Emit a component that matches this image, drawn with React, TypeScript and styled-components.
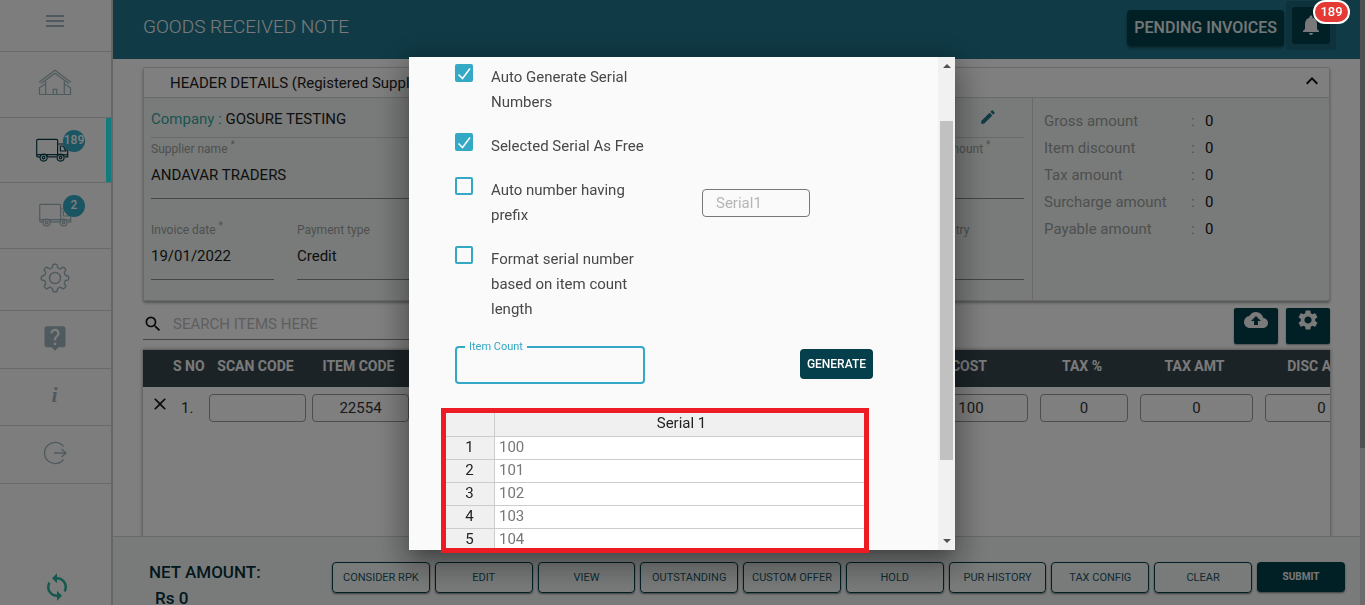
import React from "react";
import styled, { createGlobalStyle, css } from "styled-components";
import {
  MdClose,
  MdCloudUpload,
  MdEdit,
  MdKeyboardArrowUp,
  MdLiveHelp,
  MdMenu,
  MdNotifications,
  MdSearch,
  MdSettings,
  MdSync,
} from "react-icons/md";

const color = {
  ink: "#212121",
  muted: "#9c9f9d",
  petrol: "#063f4c",
  header: "#1f758c",
  accent: "#33a9c5",
  panel: "#f2f7f5",
  icon: "#9db5bb",
  line: "#d3d3d3",
};

const GlobalStyle = createGlobalStyle`
  *, *::before, *::after { box-sizing: border-box; }
  body {
    margin: 0;
    background: #fff;
    color: ${color.ink};
    font-family: Roboto, "Liberation Sans", sans-serif;
    font-size: 15px;
    line-height: 20px;
  }
  button, input { font: inherit; color: inherit; }
  button { cursor: pointer; }
`;

const Shell = styled.div`
  display: flex;
  height: 100vh;
  overflow: hidden;
`;

/* ---------- Sidebar ---------- */

const Sidebar = styled.nav`
  flex: none;
  display: flex;
  flex-direction: column;
  width: 113px;
  background: #fafafa;
  border-right: 2px solid #cdcdcd;
`;

const NavItem = styled.a<{ $height: number; $active?: boolean }>`
  position: relative;
  flex: none;
  display: flex;
  align-items: center;
  justify-content: center;
  height: ${(p) => p.$height}px;
  padding: 0 2px 4px 0;
  border-bottom: 1px solid ${color.line};
  color: ${(p) => (p.$active ? color.petrol : color.icon)};
  text-decoration: none;
  ${(p) =>
    p.$active &&
    css`
      box-shadow: inset -5px 0 0 #22f6fb;
    `}
`;

const MenuItem = styled(NavItem)`
  padding-bottom: 9px;
`;

const TruckItem = styled(NavItem)<{ $shift: number }>`
  padding: 0 0 0 ${(p) => p.$shift}px;
  justify-content: flex-start;
`;

const CountBadge = styled.span`
  position: absolute;
  left: 63px;
  top: 12px;
  width: 22px;
  height: 22px;
  border-radius: 50%;
  background: #34aac6;
  color: #fff;
  font-size: 12px;
  font-weight: 500;
  line-height: 21px;
  text-align: center;
`;

const InfoGlyph = styled.span`
  font-family: "Liberation Serif", serif;
  font-size: 22px;
  font-weight: 700;
  font-style: italic;
`;

const SyncLink = styled.a`
  display: flex;
  justify-content: center;
  margin-top: auto;
  padding: 0 0 3px 3px;
  color: #2ab09d;
`;

/* ---------- Main column ---------- */

const Main = styled.main`
  flex: 1;
  min-width: 0;
  display: flex;
  flex-direction: column;
`;

const TopBar = styled.header`
  flex: none;
  display: flex;
  align-items: center;
  height: 59px;
  padding: 0 24px 0 30px;
  background: ${color.header};
`;

const Title = styled.h1`
  flex: 1;
  margin: 0 0 6px;
  color: #f5f5f5;
  font-size: 19px;
  font-weight: 300;
  line-height: 24px;
`;

const PendingButton = styled.button`
  height: 36px;
  margin: 0 2px 3px 0;
  padding: 0 7px;
  border: 0;
  border-radius: 4px;
  background: #02404c;
  color: #e8eeee;
  font-weight: 500;
  font-size: 16px;
  box-shadow: 0 2px 3px rgba(0, 0, 0, 0.4);
`;

const BellWrap = styled.div`
  position: relative;
  margin-bottom: 9px;
  padding: 6px;
  border-radius: 2px;
  background: #1b6577;
`;

const BellButton = styled.button`
  display: flex;
  align-items: center;
  justify-content: center;
  width: 38px;
  height: 37px;
  padding: 0;
  border: 0;
  border-radius: 3px;
  background: #02404c;
  color: #f2f2f2;
`;

const AlertBadge = styled.span`
  position: absolute;
  z-index: 30;
  top: -1px;
  left: 27px;
  width: 37px;
  height: 24px;
  border: 2px solid #fff;
  border-radius: 12px;
  background: #e53935;
  color: #fff;
  font-size: 13px;
  font-weight: 500;
  line-height: 19px;
  text-align: center;
`;

const Content = styled.div`
  flex: 1;
  min-height: 0;
  display: flex;
  flex-direction: column;
  padding: 8px 30px 0;
`;

const Panel = styled.section`
  flex: none;
  border: 1px solid ${color.line};
  border-radius: 2px;
  background: ${color.panel};
  box-shadow: 0 2px 3px rgba(0, 0, 0, 0.35);
`;

const PanelHead = styled.div`
  display: flex;
  align-items: center;
  justify-content: space-between;
  height: 30px;
  padding: 0 5px 4px 26px;
  padding-bottom: 0;
  background: #fff;
  border-bottom: 1px solid ${color.line};
`;

const PanelTitle = styled.h2`
  margin: 0;
  font-size: 15px;
  font-weight: 400;
`;

const IconButton = styled.button`
  display: inline-flex;
  align-items: center;
  justify-content: center;
  padding: 0;
  border: 0;
  background: none;
  color: #111;
`;

const CollapseButton = styled(IconButton)`
  height: 20px;
  margin-bottom: 4px;
`;

const PanelBody = styled.div`
  display: flex;
  height: 202px;
`;

const PanelForm = styled.div`
  flex: 1;
  padding: 0 8px 0 7px;
  border-right: 1px solid ${color.line};
`;

const CompanyRow = styled.div`
  display: flex;
  align-items: center;
  justify-content: space-between;
  height: 40px;
  padding: 2px 27px 0 0;
  border-bottom: 1px solid ${color.line};

  button {
    margin-bottom: 4px;
    color: ${color.header};
  }
`;

const CompanyLabel = styled.span`
  color: #38a79d;
`;

const FieldRow = styled.div`
  display: grid;
  grid-template-columns: 123px 1fr 123px;
  column-gap: 23px;
  margin-bottom: 20px;
`;

const Field = styled.label<{ $span?: number }>`
  grid-column: span ${(p) => p.$span ?? 1};
  display: block;
  min-width: 0;
  color: ${color.muted};
  font-size: 12px;
  line-height: 22px;
  border-bottom: 1px solid #8a8a8a;

  sup {
    font-size: 10px;
    line-height: 0;
  }
`;

const FieldInput = styled.input`
  display: block;
  width: 100%;
  height: 30px;
  margin-bottom: 8px;
  padding: 0;
  border: 0;
  background: none;
  color: ${color.ink};
  font-size: 15px;
`;

const Summary = styled.dl`
  display: grid;
  grid-template-columns: 147px 14px 1fr;
  grid-auto-rows: 27px;
  align-items: center;
  width: 296px;
  margin: 0;
  padding: 9px 0 0 11px;
  color: ${color.muted};

  dt,
  dd {
    margin: 0;
  }
`;

const SummaryValue = styled.dd`
  color: #111;
`;

const SearchRow = styled.div`
  flex: none;
  display: flex;
  justify-content: space-between;
  align-items: flex-start;
  height: 49px;
  padding-top: 7px;
`;

const SearchBox = styled.label`
  display: flex;
  align-items: center;
  gap: 10px;
  width: 600px;
  height: 32px;
  border-bottom: 1px solid #8a8a8a;
`;

const SearchInput = styled.input`
  flex: 1;
  padding: 0;
  border: 0;
  background: none;

  &::placeholder {
    color: #bdbdbd;
    opacity: 1;
  }
`;

const ToolGroup = styled.div`
  display: flex;
  gap: 8px;
`;

const ToolButton = styled.button`
  display: flex;
  justify-content: center;
  align-items: flex-start;
  width: 44px;
  height: 36px;
  padding: 0;
  border: 0;
  border-radius: 2px;
  background: #02404c;
  color: #f5f5f5;
  box-shadow: 0 1px 2px rgba(0, 0, 0, 0.4);
`;

const ItemsFrame = styled.div`
  flex: 1;
  min-height: 0;
  overflow: hidden;
  box-shadow: 0 0 3px 1px rgba(0, 0, 0, 0.3);
`;

const ItemsTable = styled.table`
  width: calc(100% + 54px);
  table-layout: fixed;
  border-collapse: collapse;

  th {
    height: 37px;
    padding: 0 4px 5px 0;
    background: #37474f;
    color: #f5f5f5;
    font-size: 14px;
    font-weight: 700;
    white-space: nowrap;
  }

  td {
    height: 42px;
    padding: 0 3px;
  }

  td:first-child {
    padding: 0 0 4px 7px;
  }
`;

const CellInput = styled.input<{ $inset?: boolean }>`
  display: block;
  width: ${(p) => (p.$inset ? "calc(100% - 6px)" : "100%")};
  height: 28px;
  margin: 0 auto;
  padding: 0;
  border: 1px solid #9a9a9a;
  border-radius: 4px;
  background: none;
  color: #333;
  text-align: center;
`;

const RowNumber = styled.td`
  && {
    padding: 0 0 1px 8px;
  }
  color: #333;
`;

const Footer = styled.footer`
  flex: none;
  display: flex;
  height: 69px;
  padding: 25px 15px 0 36px;
  border-top: 1px solid ${color.line};
  background: ${color.panel};
`;

const NetAmount = styled.div`
  flex: none;
  width: 183px;
  color: #06303c;
  font-size: 17px;
  font-weight: 500;
  line-height: 20px;
`;

const NetValue = styled.div`
  padding: 6px 0 0 6px;
`;

const Actions = styled.div`
  flex: 1;
  display: grid;
  grid-template-columns: repeat(9, 1fr) 88px;
  align-items: start;
  gap: 5px;
`;

const ActionButton = styled.button<{ $solid?: boolean }>`
  height: ${(p) => (p.$solid ? 30 : 31)}px;
  padding: 0;
  border: ${(p) => (p.$solid ? "0" : `1px solid ${color.petrol}`)};
  border-radius: 4px;
  background: ${(p) => (p.$solid ? "#02404c" : "none")};
  color: ${(p) => (p.$solid ? "#f0f0f0" : "#1d5563")};
  font-size: ${(p) => (p.$solid ? 10 : 11)}px;
  font-weight: ${(p) => (p.$solid ? 700 : 400)};
  white-space: nowrap;
  box-shadow: 0 1px 2px rgba(0, 0, 0, 0.5);
`;

/* ---------- Scroll indicators ---------- */

const PageScroll = styled.div`
  flex: none;
  width: 5px;
  background: #d6d6d6;
`;

const PageThumb = styled.div`
  height: 74%;
  background: #a0a0a0;
`;

const DialogScroll = styled.div`
  flex: none;
  display: flex;
  flex-direction: column;
  align-items: center;
  justify-content: space-between;
  width: 17px;
  padding: 7px 0;
  background: #f1f1f1;
`;

const DialogThumb = styled.div`
  width: 13px;
  height: 339px;
  margin-bottom: 26px;
  background: #c1c1c1;
`;

const ScrollArrow = styled.span<{ $down?: boolean }>`
  border: 4px solid transparent;
  ${(p) =>
    p.$down
      ? "border-top-color: #505050; border-bottom: 0;"
      : "border-bottom-color: #505050; border-top: 0;"}
`;

/* ---------- Dialog ---------- */

const Backdrop = styled.div`
  position: fixed;
  inset: 0;
  z-index: 20;
  display: grid;
  grid-template-columns: 1fr 546px 1fr;
  padding: 57px 1px 55px 0;
  background: rgba(0, 0, 0, 0.5);
`;

const Dialog = styled.div`
  position: relative;
  grid-column: 2;
  display: flex;
  min-height: 0;
  background: #fafafa;
  box-shadow: 0 11px 15px -7px rgba(0, 0, 0, 0.2), 0 12px 30px 3px rgba(0, 0, 0, 0.24),
    0 9px 30px 8px rgba(0, 0, 0, 0.16);
`;

const DialogBody = styled.div`
  flex: 1;
  overflow: hidden;
  padding: 8px 65px 0 46px;
  color: #484848;
`;

const Options = styled.div`
  display: flex;
  flex-direction: column;
  gap: 19px;
`;

const OptionRow = styled.div`
  display: flex;
  align-items: center;
`;

const Option = styled.label`
  display: flex;
  align-items: flex-start;
  gap: 18px;
  width: 196px;
  line-height: 25px;
`;

const Tick = styled.input`
  flex: none;
  appearance: none;
  width: 18px;
  height: 18px;
  margin: -1px 0 0;
  border: 2px solid ${color.accent};
  border-radius: 2px;

  &:checked {
    background: ${color.accent}
      url("data:image/svg+xml,%3Csvg xmlns='http://www.w3.org/2000/svg' viewBox='0 0 14 14'%3E%3Cpath d='M1.5 8.5l4 4L13 2.5' fill='none' stroke='white' stroke-width='1.5'/%3E%3C/svg%3E")
      center / 14px 14px no-repeat;
  }
`;

const PrefixInput = styled.input`
  width: 108px;
  height: 28px;
  margin-left: 51px;
  padding: 0 13px;
  border: 1px solid #777;
  border-radius: 4px;
  background: none;

  &::placeholder {
    color: #b5b5b5;
    opacity: 1;
  }
`;

const GenerateRow = styled.div`
  display: flex;
  align-items: flex-start;
  justify-content: space-between;
  margin: 18px 0 27px;
`;

const CountField = styled.fieldset`
  width: 190px;
  height: 44px;
  margin: 0;
  padding: 0 8px;
  border: 2px solid ${color.accent};
  border-radius: 4px;
`;

const CountLegend = styled.legend`
  padding: 0 4px;
  color: ${color.accent};
  font-size: 11px;
  line-height: 14px;
`;

const CountInput = styled.input`
  display: block;
  width: 100%;
  height: 24px;
  padding: 0;
  border: 0;
  outline: 0;
  background: none;
`;

const GenerateButton = styled.button`
  height: 30px;
  margin-top: 9px;
  padding: 0 7px;
  border: 0;
  border-radius: 4px;
  background: ${color.petrol};
  color: #fff;
  font-size: 12px;
  font-weight: 500;
`;

const SerialTable = styled.table`
  width: 424px;
  margin-left: -10px;
  table-layout: fixed;
  border-collapse: separate;
  border-spacing: 0;

  th,
  td {
    height: 23px;
    padding: 0 4px 2px;
    border: 0 solid #ccc;
    border-width: 0 1px 1px 0;
    line-height: 20px;
  }

  th {
    background: #f0f0f0;
    color: #222;
    font-weight: 400;
  }

  thead th {
    height: 26px;
  }

  td {
    background: #fff;
    color: #777;
  }
`;

const Highlight = styled.div`
  position: absolute;
  top: 351px;
  right: 86px;
  bottom: -3px;
  left: 32px;
  border: 5px solid #ed1c24;
  pointer-events: none;
`;

/* ---------- Drawings ---------- */

const HouseIcon = () => (
  <svg width="34" height="27" viewBox="0 0 34 27" fill="none" stroke="currentColor" strokeWidth="1.2">
    <path d="M1 13.2 17 1.2l16 12M3 14.6 17 4.2l14 10.4" />
    <path d="M7.7 12v13.5M26.3 12v13.5M7.7 14.8l-6.2 4v6.7h31v-6.7l-6.2-4" />
    <path d="M15.3 25.5v-5.2h3.4v5.2" />
  </svg>
);

const TruckIcon = () => (
  <svg width="33" height="25" viewBox="0 0 33 25" fill="none" stroke="currentColor" strokeWidth="1.2">
    <path d="M4 18.8H1.8a1.1 1.1 0 0 1-1.1-1.1V2.5A1.1 1.1 0 0 1 1.8 1.4h18.7a1.1 1.1 0 0 1 1.1 1.1v14.2H.9" />
    <path d="M21.8 6h6.4l3.5 7v5.8h-3M24.4 8h3l2.4 5h-5.4zM11.2 18.8h9.4M11.2 16.8v2M20.6 16.8h11" />
    <circle cx="7.6" cy="19.6" r="3.5" />
    <circle cx="7.6" cy="19.6" r="1.3" />
    <circle cx="24.6" cy="19.6" r="3.5" />
    <circle cx="24.6" cy="19.6" r="1.3" />
  </svg>
);

const GearIcon = () => (
  <svg width="30" height="30" viewBox="0 0 30 30" fill="none" stroke="currentColor" strokeWidth="1.4">
    {Array.from({ length: 8 }, (_, i) => (
      <path
        key={i}
        transform={`rotate(${i * 45} 15 15)`}
        d="M11 5.3Q12.7 4.9 12.7 3.1Q12.7 1.3 14 1.3H16Q17.3 1.3 17.3 3.1Q17.3 4.9 19 5.3"
      />
    ))}
    <circle cx="15" cy="15" r="5.5" />
  </svg>
);

const ExitIcon = () => (
  <svg width="24" height="24" viewBox="0 0 24 24" fill="none" stroke="currentColor" strokeWidth="1.3">
    <path d="M20.5 5.5A10.6 10.6 0 1 0 20.5 18.5" />
    <path d="M11 12h12M18.5 8l4.5 4-4.5 4" />
  </svg>
);

const summary = [
  "Gross amount",
  "Item discount",
  "Tax amount",
  "Surcharge amount",
  "Payable amount",
];

const actions = [
  "CONSIDER RPK",
  "EDIT",
  "VIEW",
  "OUTSTANDING",
  "CUSTOM OFFER",
  "HOLD",
  "PUR HISTORY",
  "TAX CONFIG",
  "CLEAR",
];

const serials = [100, 101, 102, 103, 104, 105];

const columns: { name: string; value: string; width?: number; inset?: boolean }[] = [
  { name: "SCAN CODE", value: "", width: 103 },
  { name: "ITEM CODE", value: "22554", width: 103 },
  { name: "ITEM NAME", value: "" },
  { name: "COST", value: "100", width: 126, inset: true },
  { name: "TAX %", value: "0", width: 100, inset: true },
  { name: "TAX AMT", value: "0", width: 125, inset: true },
  { name: "DISC AMT", value: "0", width: 125, inset: true },
];

export default function App() {
  return (
    <>
      <GlobalStyle />
      <Shell>
        <Sidebar aria-label="Main">
          <MenuItem href="#menu" aria-label="Menu" $height={52}>
            <MdMenu size={24} />
          </MenuItem>
          <NavItem href="#home" aria-label="Home" $height={66}>
            <HouseIcon />
          </NavItem>
          <TruckItem href="#received" aria-label="Goods received" $height={65} $shift={36} $active>
            <TruckIcon />
            <CountBadge>189</CountBadge>
          </TruckItem>
          <TruckItem href="#returns" aria-label="Goods returned" $height={66} $shift={39}>
            <TruckIcon />
            <CountBadge>2</CountBadge>
          </TruckItem>
          <NavItem href="#settings" aria-label="Settings" $height={62}>
            <GearIcon />
          </NavItem>
          <NavItem href="#help" aria-label="Help" $height={58}>
            <MdLiveHelp size={28} />
          </NavItem>
          <NavItem href="#about" aria-label="About" $height={57}>
            <InfoGlyph>i</InfoGlyph>
          </NavItem>
          <NavItem href="#logout" aria-label="Log out" $height={58}>
            <ExitIcon />
          </NavItem>
          <SyncLink href="#sync" aria-label="Sync">
            <MdSync size={30} />
          </SyncLink>
        </Sidebar>

        <Main>
          <TopBar>
            <Title>GOODS RECEIVED NOTE</Title>
            <PendingButton>PENDING INVOICES</PendingButton>
            <BellWrap>
              <BellButton aria-label="Notifications">
                <MdNotifications size={24} />
              </BellButton>
              <AlertBadge>189</AlertBadge>
            </BellWrap>
          </TopBar>

          <Content>
            <Panel>
              <PanelHead>
                <PanelTitle>HEADER DETAILS (Registered Supplier)</PanelTitle>
                <CollapseButton aria-label="Collapse">
                  <MdKeyboardArrowUp size={24} />
                </CollapseButton>
              </PanelHead>
              <PanelBody>
                <PanelForm>
                  <CompanyRow>
                    <span>
                      <CompanyLabel>Company :</CompanyLabel> GOSURE TESTING
                    </span>
                    <IconButton aria-label="Edit company">
                      <MdEdit size={18} />
                    </IconButton>
                  </CompanyRow>
                  <FieldRow>
                    <Field $span={2}>
                      Supplier name <sup>*</sup>
                      <FieldInput defaultValue="ANDAVAR TRADERS" />
                    </Field>
                    <Field>
                      Invoice amount <sup>*</sup>
                      <FieldInput />
                    </Field>
                  </FieldRow>
                  <FieldRow>
                    <Field>
                      Invoice date <sup>*</sup>
                      <FieldInput defaultValue="19/01/2022" />
                    </Field>
                    <Field>
                      Payment type
                      <FieldInput defaultValue="Credit" />
                    </Field>
                    <Field>
                      Date of entry
                      <FieldInput />
                    </Field>
                  </FieldRow>
                </PanelForm>
                <Summary>
                  {summary.map((name) => (
                    <React.Fragment key={name}>
                      <dt>{name}</dt>
                      <span>:</span>
                      <SummaryValue>0</SummaryValue>
                    </React.Fragment>
                  ))}
                </Summary>
              </PanelBody>
            </Panel>

            <SearchRow>
              <SearchBox>
                <MdSearch size={20} color="#111" />
                <SearchInput aria-label="Search items" placeholder="SEARCH ITEMS HERE" />
              </SearchBox>
              <ToolGroup>
                <ToolButton aria-label="Upload">
                  <MdCloudUpload size={24} />
                </ToolButton>
                <ToolButton aria-label="Table settings">
                  <MdSettings size={24} />
                </ToolButton>
              </ToolGroup>
            </SearchRow>

            <ItemsFrame>
              <ItemsTable>
                <colgroup>
                  <col width="30" />
                  <col width="33" />
                  {columns.map((c) => (
                    <col key={c.name} width={c.width} />
                  ))}
                </colgroup>
                <thead>
                  <tr>
                    <th />
                    <th>S NO</th>
                    {columns.map((c) => (
                      <th key={c.name}>{c.name}</th>
                    ))}
                  </tr>
                </thead>
                <tbody>
                  <tr>
                    <td>
                      <IconButton aria-label="Remove item">
                        <MdClose size={20} />
                      </IconButton>
                    </td>
                    <RowNumber>1.</RowNumber>
                    {columns.map((c) => (
                      <td key={c.name}>
                        <CellInput aria-label={c.name} defaultValue={c.value} $inset={c.inset} />
                      </td>
                    ))}
                  </tr>
                </tbody>
              </ItemsTable>
            </ItemsFrame>
          </Content>

          <Footer>
            <NetAmount>
              NET AMOUNT:
              <NetValue>Rs 0</NetValue>
            </NetAmount>
            <Actions>
              {actions.map((name) => (
                <ActionButton key={name}>{name}</ActionButton>
              ))}
              <ActionButton $solid>SUBMIT</ActionButton>
            </Actions>
          </Footer>
        </Main>

        <PageScroll>
          <PageThumb />
        </PageScroll>
      </Shell>

      <Backdrop>
        <Dialog role="dialog" aria-label="Serial numbers">
          <DialogBody>
            <Options>
              <Option>
                <Tick type="checkbox" defaultChecked />
                Auto Generate Serial Numbers
              </Option>
              <Option>
                <Tick type="checkbox" defaultChecked />
                Selected Serial As Free
              </Option>
              <OptionRow>
                <Option>
                  <Tick type="checkbox" />
                  Auto number having prefix
                </Option>
                <PrefixInput aria-label="Prefix" placeholder="Serial1" />
              </OptionRow>
              <Option>
                <Tick type="checkbox" />
                Format serial number based on item count length
              </Option>
            </Options>
            <GenerateRow>
              <CountField>
                <CountLegend>
                  <label htmlFor="item-count">Item Count</label>
                </CountLegend>
                <CountInput id="item-count" />
              </CountField>
              <GenerateButton>GENERATE</GenerateButton>
            </GenerateRow>
            <SerialTable>
              <colgroup>
                <col width="50" />
                <col />
              </colgroup>
              <thead>
                <tr>
                  <th />
                  <th>Serial 1</th>
                </tr>
              </thead>
              <tbody>
                {serials.map((serial, index) => (
                  <tr key={serial}>
                    <th>{index + 1}</th>
                    <td>{serial}</td>
                  </tr>
                ))}
              </tbody>
            </SerialTable>
          </DialogBody>
          <DialogScroll aria-hidden="true">
            <ScrollArrow />
            <DialogThumb />
            <ScrollArrow $down />
          </DialogScroll>
          <Highlight />
        </Dialog>
      </Backdrop>
    </>
  );
}
